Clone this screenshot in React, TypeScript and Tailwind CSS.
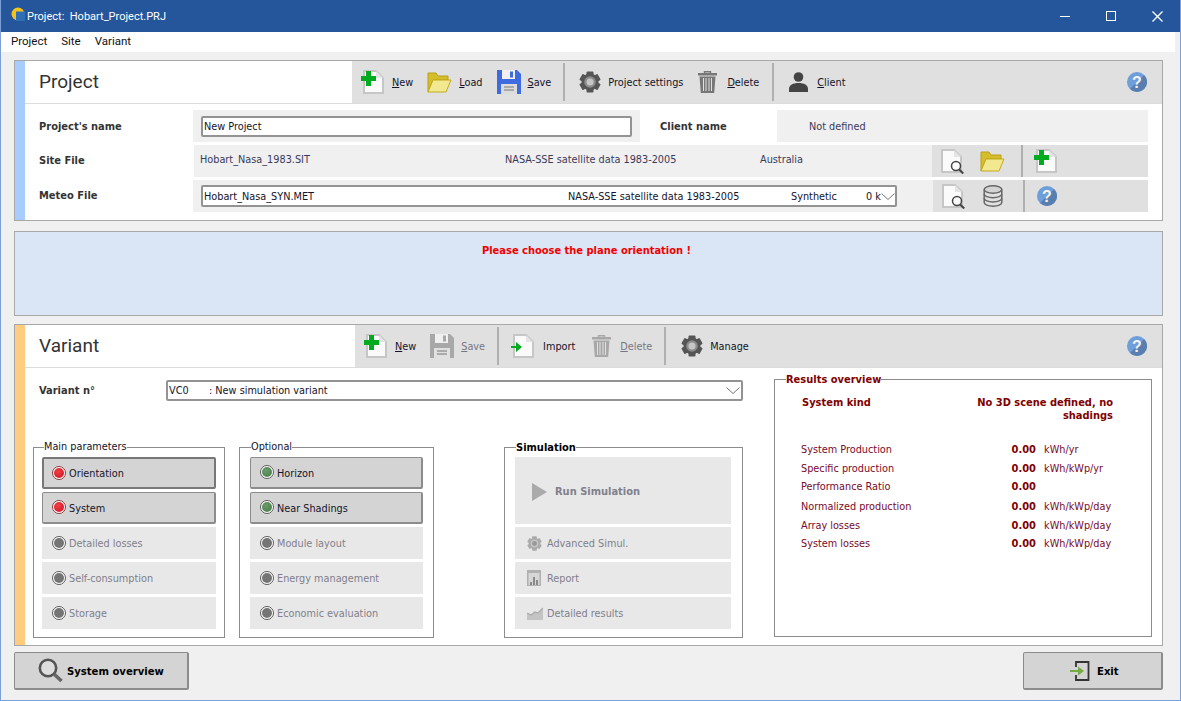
import type { ReactNode } from 'react';

// --- icons ---

function PlusMark({ x = 0, y = 0 }: { x?: number; y?: number }) {
  return <path d={`M${x + 5} ${y}h5v5h5v5h-5v5h-5v-5h-5v-5h5z`} fill="#00ab1f" />;
}

function Page({ x = 0, color = '#c6c6c6' }: { x?: number; color?: string }) {
  return (
    <>
      <path d={`M${x + 1} 1h12l7 7v15h-19z`} fill="#fafafa" stroke={color} strokeWidth="2" />
      <path d={`M${x + 13} 1v7h7z`} fill="#e4e4e4" />
    </>
  );
}

function NewDoc() {
  return (
    <svg width="23" height="24" viewBox="0 0 23 24">
      <Page x={2} />
      <PlusMark x={0} y={1} />
    </svg>
  );
}

function ImportDoc() {
  return (
    <svg width="23" height="24" viewBox="0 0 23 24">
      <Page x={2} />
      <path d="M0 12h5V8l6 5-6 5v-4H0z" fill="#00ab1f" />
    </svg>
  );
}

function DocSearch() {
  return (
    <svg width="23" height="25" viewBox="0 0 23 25">
      <Page x={0} />
      <circle cx="15" cy="17" r="4.500" fill="#fafafa" stroke="#444" strokeWidth="1.500" />
      <path d="M18.200 20.500l4 4" stroke="#444" strokeWidth="2" />
    </svg>
  );
}

function Folder() {
  return (
    <svg width="25" height="21" viewBox="0 0 25 21">
      <path d="M1 20V1h8l2 3h10v4H6z" fill="#d6bd2c" stroke="#b9a117" />
      <path d="M1 20L6 8h18l-5 12z" fill="#f1e88f" stroke="#c4ab1c" />
    </svg>
  );
}

function Floppy({ color = '#3e6be0', light = '#dcdcdc' }: { color?: string; light?: string }) {
  return (
    <svg width="24" height="24" viewBox="0 0 24 24">
      <path d="M0 0h20l4 4v20H0z" fill={color} />
      <rect x="5" y="0" width="13" height="9" fill="#f0f0f0" />
      <rect x="13" y="1.500" width="3" height="6" fill={color} />
      <rect x="4" y="14" width="16" height="10" fill={light} />
      <path d="M7 17h10M7 20h10" stroke="#999" strokeWidth="1.300" />
    </svg>
  );
}

function Gear({ size = 22, color = '#555', mid = '#8c8c8c', hub = '#c6c6c6' }: { size?: number; color?: string; mid?: string; hub?: string }) {
  return (
    <svg width={size} height={size} viewBox="0 0 22 22">
      <g fill={color}>
        <circle cx="11" cy="11" r="8.500" />
        {[0, 60, 120, 180, 240, 300].map((a) => (
          <rect key={a} x="7.500" y="0.500" width="7" height="5" rx="1" transform={`rotate(${a} 11 11)`} />
        ))}
      </g>
      <circle cx="11" cy="11" r="5.800" fill={mid} />
      <circle cx="11" cy="11" r="3.500" fill={hub} />
    </svg>
  );
}

function Trash({ color = '#777' }: { color?: string }) {
  return (
    <svg width="19" height="22" viewBox="0 0 19 22">
      <path d="M6.500 2V.7h6V2" fill="none" stroke={color} strokeWidth="1.400" />
      <rect x="0" y="2" width="19" height="2.500" fill={color} />
      <path d="M1.500 5.500h16l-1.300 16.500H2.800z" fill={color} />
      <path d="M5.500 7v13M8 7v13M11 7v13M13.500 7v13" stroke="#e0e0e0" strokeWidth="1" />
    </svg>
  );
}

function User() {
  return (
    <svg width="19" height="20" viewBox="0 0 19 20">
      <circle cx="9.500" cy="5" r="4.800" fill="#444" />
      <path d="M0 20v-3c0-4 4-6 9.500-6s9.500 2 9.500 6v3z" fill="#444" />
    </svg>
  );
}

function Help() {
  return (
    <svg width="20" height="20" viewBox="0 0 20 20">
      <circle cx="10" cy="10" r="10" fill="#6f9fdb" />
      <path d="M17.100 2.900A10 10 0 0 1 3 17.100z" fill="#587fb0" />
      <text x="10" y="15.500" textAnchor="middle" fontSize="16" fontWeight="700" fill="#f4f4f4" fontFamily="'Liberation Sans', sans-serif">
        ?
      </text>
    </svg>
  );
}

function Database() {
  return (
    <svg width="20" height="22" viewBox="0 0 20 22">
      <g fill="none" stroke="#666" strokeWidth="1.500">
        <ellipse cx="10" cy="4.500" rx="8.800" ry="3.700" fill="#d4d4d4" />
        <path d="M1.200 4.500v13c0 2 3.900 3.700 8.800 3.700s8.800-1.700 8.800-3.700v-13" />
        <path d="M1.200 9c0 2 3.900 3.700 8.800 3.700s8.800-1.700 8.800-3.700M1.200 13.300c0 2 3.900 3.700 8.800 3.700s8.800-1.700 8.800-3.700" />
      </g>
    </svg>
  );
}

function Magnifier() {
  return (
    <svg width="25" height="25" viewBox="0 0 25 25">
      <circle cx="10" cy="10" r="8.200" fill="#f4f4f4" fillOpacity=".3" stroke="#555" strokeWidth="2.600" />
      <path d="M16 16l7.500 7" stroke="#666" strokeWidth="3.600" />
    </svg>
  );
}

function ExitIcon() {
  return (
    <svg width="20" height="20" viewBox="0 0 20 20">
      <path d="M6 6V1h12.500v18H6v-5" fill="none" stroke="#333" strokeWidth="1.800" />
      <path d="M0 9h8V5.500l6 4.500-6 4.500V11H0z" fill="#74ab42" />
    </svg>
  );
}

function ReportIcon() {
  return (
    <svg width="14" height="16" viewBox="0 0 14 16">
      <rect width="14" height="16" fill="#b0b0b0" />
      <rect x="1.500" y="3" width="11" height="12" fill="#d6d6d6" />
      <path d="M4 15v-3M7 15V7M10 15v-5" stroke="#8a8a8a" strokeWidth="2" />
    </svg>
  );
}

function ChartIcon() {
  return (
    <svg width="16" height="13" viewBox="0 0 16 13">
      <path d="M0 13V6l4 2 4-3 3 1 5-5v12z" fill="#c4c4c4" />
      <path d="M0 6l4 2 4-3 3 1 5-5" fill="none" stroke="#aaa" strokeWidth="1.200" />
    </svg>
  );
}

function Chevron() {
  return (
    <svg width="14" height="7" viewBox="0 0 14 7" className="shrink-0">
      <path d="M.5 .5L7 6.500 13.500 .5" fill="none" stroke="#777" />
    </svg>
  );
}

function Led({ tone }: { tone: 'red' | 'green' | 'gray' }) {
  const ring = tone === 'red' ? 'border-[#8a3a3a]' : 'border-[#5a5a5a]';
  const dot =
    tone === 'red'
      ? 'bg-[radial-gradient(circle_at_40%_35%,#ee4048,#d01020)]'
      : tone === 'green'
        ? 'bg-[radial-gradient(circle_at_40%_35%,#6a9a6a,#447c46)]'
        : 'bg-[#757575]';
  return (
    <span className={`flex h-[14px] w-[14px] shrink-0 items-center justify-center rounded-full border bg-white ${ring}`}>
      <span className={`h-[10px] w-[10px] rounded-full ${dot}`} />
    </span>
  );
}

// --- shared bits ---

function ToolItem({ icon, label, className, disabled }: { icon: ReactNode; label: ReactNode; className: string; disabled?: boolean }) {
  return (
    <div className={`flex shrink-0 items-center ${className} ${disabled ? 'text-[#777784]' : 'text-[#14142a]'}`}>
      {icon}
      {label}
    </div>
  );
}

function Sep({ className }: { className: string }) {
  return <div className={`h-[38px] w-[2px] shrink-0 bg-[#b0b0b0] ${className}`} />;
}

function Panel({ stripe, children }: { stripe: string; children: ReactNode }) {
  return (
    <div className="ml-[13px] flex w-[1149px] border border-[#a8a8a8] bg-white">
      <div className={`w-[10px] shrink-0 ${stripe}`} />
      <div className="min-w-0 flex-1">{children}</div>
    </div>
  );
}

function Header({ title, width, children }: { title: string; width: string; children: ReactNode }) {
  return (
    <div className="flex h-[43px] border-b border-[#dcdcdc]">
      <div className={`flex shrink-0 items-center pb-[1px] pl-[14px] font-['Roboto','Open_Sans',sans-serif] text-[19px] text-[#333] ${width}`}>{title}</div>
      <div className="flex flex-1 items-center bg-[#e0e0e0]">
        {children}
        <div className="ml-auto mr-[15px]">
          <Help />
        </div>
      </div>
    </div>
  );
}

function ParamButton({ label, tone, state }: { label: string; tone: 'red' | 'green' | 'gray'; state: 'focus' | 'raised' | 'off' }) {
  const look =
    state === 'focus'
      ? 'rounded-[2px] border-2 border-[#777] bg-[#d4d4d4] text-[#14142a]'
      : state === 'raised'
        ? 'rounded-[2px] border border-b-2 border-r-2 border-[#8c8c8c] bg-[#d4d4d4] text-[#14142a]'
        : 'bg-[#e8e8e8] text-[#80808c]';
  return (
    <div className={`box-border flex h-[32px] items-center gap-[3px] ${state === 'focus' ? 'pl-[8px]' : state === 'raised' ? 'pl-[9px]' : 'pl-[10px]'} ${look}`}>
      <Led tone={tone} />
      <span className="pt-[4px]">{label}</span>
    </div>
  );
}

function SimButton({ icon, label }: { icon: ReactNode; label: string }) {
  return (
    <div className="flex h-[32px] items-center bg-[#e8e8e8] pl-[12px] text-[#80808c]">
      <span className="flex w-[20px] shrink-0 items-center">{icon}</span>
      <span className="pt-[2px]">{label}</span>
    </div>
  );
}

const results = [
  { label: 'System Production', unit: 'kWh/yr', cls: 'h-[19px]' },
  { label: 'Specific production', unit: 'kWh/kWp/yr', cls: 'h-[18px]' },
  { label: 'Performance Ratio', unit: '', cls: 'h-[19px]' },
  { label: 'Normalized production', unit: 'kWh/kWp/day', cls: 'h-[20px]' },
  { label: 'Array losses', unit: 'kWh/kWp/day', cls: 'h-[18px]' },
  { label: 'System losses', unit: 'kWh/kWp/day', cls: 'h-[18px]' },
];

export default function App() {
  return (
    <div className="box-border flex h-[701px] w-[1181px] flex-col overflow-hidden border-x border-b border-[#7b9fd6] bg-[#f0f0f0] font-['DejaVu_Sans_Condensed','DejaVu_Sans',sans-serif] text-[10.8px] leading-none text-[#14142a]">
      {/* title bar */}
      <div className="flex h-[32px] shrink-0 items-center bg-[#25569b] font-['Roboto','Open_Sans',sans-serif] text-[11px] text-white">
        <svg width="14" height="14" viewBox="0 0 14 14" className="ml-[10px] mr-[2px] -mt-[5px]">
          <circle cx="7" cy="7" r="6.500" fill="#f5c21b" />
          <path d="M5 4.500h9V14H5z" fill="#2f6fb5" />
        </svg>
        <span className="whitespace-pre">Project:  Hobart_Project.PRJ</span>
        <div className="ml-auto flex items-center">
          <div className="mr-[36px] h-[1px] w-[10px] bg-white" />
          <div className="mr-[36px] h-[10px] w-[10px] border border-white" />
          <svg width="11" height="11" viewBox="0 0 11 11" className="mr-[17px]">
            <path d="M.5 .5l10 10M10.500 .5l-10 10" stroke="#fff" strokeWidth="1.400" />
          </svg>
        </div>
      </div>

      {/* menu */}
      <div className="flex h-[20px] w-[1174px] shrink-0 items-center gap-[14px] bg-white pl-[10px] font-['Roboto','Open_Sans',sans-serif] text-[11.5px] text-[#111]">
        <span>Project</span>
        <span>Site</span>
        <span>Variant</span>
      </div>

      <div className="h-[8px] shrink-0" />

      {/* project panel */}
      <Panel stripe="bg-[#a9ccff]">
        <div className="h-[159px]">
          <Header title="Project" width="w-[327px]">
            <ToolItem className="ml-[9px]" icon={<NewDoc />} label={<span className="ml-[8px] pt-[3px]"><u>N</u>ew</span>} />
            <ToolItem className="ml-[14px]" icon={<Folder />} label={<span className="ml-[7px] pt-[3px]"><u>L</u>oad</span>} />
            <ToolItem className="ml-[14px]" icon={<Floppy />} label={<span className="ml-[7px] pt-[3px]"><u>S</u>ave</span>} />
            <Sep className="ml-[12px]" />
            <ToolItem className="ml-[14px]" icon={<Gear />} label={<span className="ml-[7px] pt-[3px]">Project settings</span>} />
            <ToolItem className="ml-[15px]" icon={<Trash />} label={<span className="ml-[10px] pt-[3px]"><u>D</u>elete</span>} />
            <Sep className="ml-[13px]" />
            <ToolItem className="ml-[15px]" icon={<User />} label={<span className="ml-[9px] pt-[3px]"><u>C</u>lient</span>} />
          </Header>

          <div className="mt-[6px] flex flex-col gap-[3px] text-[#3a3a5a]">
            <div className="flex h-[32px] items-center">
              <div className="w-[168px] shrink-0 pl-[14px] text-[11px] font-bold text-[#333]">Project's name</div>
              <div className="flex h-full w-[447px] shrink-0 items-center bg-[#f0f0f0] pl-[8px]">
                <div className="box-border flex h-[21px] w-[431px] items-center rounded-[2px] border-2 border-[#939393] bg-white pl-[1px] pt-[2px] text-[#14142a]">New Project</div>
              </div>
              <div className="w-[137px] shrink-0 pl-[20px] text-[11px] font-bold text-[#333]">Client name</div>
              <div className="flex h-full w-[371px] shrink-0 items-center bg-[#f0f0f0] pl-[32px] pt-[2px]">Not defined</div>
            </div>

            <div className="flex h-[32px] items-center">
              <div className="w-[169px] shrink-0 pb-[2px] pl-[14px] text-[11px] font-bold text-[#333]">Site File</div>
              <div className="flex h-full w-[738px] shrink-0 items-center bg-[#f0f0f0] pb-[2px] pl-[6px]">
                <span className="w-[305px] shrink-0">Hobart_Nasa_1983.SIT</span>
                <span className="w-[255px] shrink-0">NASA-SSE satellite data 1983-2005</span>
                <span>Australia</span>
              </div>
              <div className="flex h-full w-[216px] shrink-0 items-center bg-[#e0e0e0] pl-[9px]">
                <DocSearch />
                <div className="ml-[16px]"><Folder /></div>
                <div className="ml-[16px] h-full w-[2px] bg-[#b0b0b0]" />
                <div className="ml-[11px]"><NewDoc /></div>
              </div>
            </div>

            <div className="flex h-[32px] items-center">
              <div className="w-[168px] shrink-0 pb-[2px] pl-[14px] text-[11px] font-bold text-[#333]">Meteo File</div>
              <div className="flex h-full w-[740px] shrink-0 items-center bg-[#f0f0f0] pl-[8px]">
                <div className="box-border flex h-[22px] w-[696px] items-center rounded-[2px] border-2 border-[#939393] bg-white pl-[1px] text-[#14142a]">
                  <span className="w-[364px] shrink-0 pt-[2px]">Hobart_Nasa_SYN.MET</span>
                  <span className="w-[223px] shrink-0 pt-[2px]">NASA-SSE satellite data 1983-2005</span>
                  <span className="w-[75px] shrink-0 pt-[2px]">Synthetic</span>
                  <span className="w-[15px] shrink-0 whitespace-nowrap pt-[2px]">0 k</span>
                  <Chevron />
                </div>
              </div>
              <div className="flex h-full w-[215px] shrink-0 items-center bg-[#e0e0e0] pl-[9px]">
                <DocSearch />
                <div className="ml-[18px]"><Database /></div>
                <div className="ml-[20px] h-full w-[2px] bg-[#b0b0b0]" />
                <div className="ml-[12px]"><Help /></div>
              </div>
            </div>
          </div>
        </div>
      </Panel>

      {/* message box */}
      <div className="ml-[13px] mt-[10px] box-border h-[85px] w-[1149px] border border-[#a8a8a8] bg-[#dae5f5] pr-[4px] pt-[13px] text-center text-[11px] font-bold text-[#f00000]">
        Please choose the plane orientation !
      </div>

      {/* variant panel */}
      <div className="mt-[8px]">
        <Panel stripe="bg-[#ffcc80]">
          <div className="h-[320px]">
            <Header title="Variant" width="w-[330px]">
              <ToolItem className="ml-[9px]" icon={<NewDoc />} label={<span className="ml-[8px] pt-[3px]"><u>N</u>ew</span>} />
              <ToolItem className="ml-[14px]" disabled icon={<Floppy color="#a8a8a8" light="#e0e0e0" />} label={<span className="ml-[7px] pt-[3px]"><u>S</u>ave</span>} />
              <Sep className="ml-[12px]" />
              <ToolItem className="ml-[12px]" icon={<ImportDoc />} label={<span className="ml-[9px] pt-[3px]">Import</span>} />
              <ToolItem className="ml-[17px]" disabled icon={<Trash color="#a8a8a8" />} label={<span className="ml-[9px] pt-[3px]"><u>D</u>elete</span>} />
              <Sep className="ml-[12px]" />
              <ToolItem className="ml-[15px]" icon={<Gear />} label={<span className="ml-[7px] pt-[3px]">Manage</span>} />
            </Header>

            <div className="flex">
              <div className="w-[749px] shrink-0">
                <div className="mt-[12px] flex h-[21px] items-center">
                  <div className="w-[141px] shrink-0 pl-[14px] text-[11px] font-bold text-[#333]">Variant n°</div>
                  <div className="box-border flex h-[21px] w-[577px] items-center justify-between rounded-[2px] border-2 border-[#939393] bg-white pl-[1px] pr-[1px] text-[#14142a]">
                    <span className="flex pt-[2px]">
                      <span className="w-[40px]">VC0</span>
                      <span>: New simulation variant</span>
                    </span>
                    <Chevron />
                  </div>
                </div>

                <div className="mt-[41px] flex items-start pl-[8px]">
                  <fieldset className="box-border h-[196px] w-[192px] border border-[#8c8c8c] px-[8px]">
                    <legend className="ml-[2px] text-[#14142a]">Main parameters</legend>
                    <div className="mt-[4px] flex flex-col gap-[3px]">
                      <ParamButton label="Orientation" tone="red" state="focus" />
                      <ParamButton label="System" tone="red" state="raised" />
                      <ParamButton label="Detailed losses" tone="gray" state="off" />
                      <ParamButton label="Self-consumption" tone="gray" state="off" />
                      <ParamButton label="Storage" tone="gray" state="off" />
                    </div>
                  </fieldset>
                  <fieldset className="ml-[14px] box-border h-[196px] w-[195px] border border-[#8c8c8c] pl-[10px] pr-[10px]">
                    <legend className="ml-[1px] text-[#14142a]">Optional</legend>
                    <div className="mt-[4px] flex flex-col gap-[3px]">
                      <ParamButton label="Horizon" tone="green" state="raised" />
                      <ParamButton label="Near Shadings" tone="green" state="raised" />
                      <ParamButton label="Module layout" tone="gray" state="off" />
                      <ParamButton label="Energy management" tone="gray" state="off" />
                      <ParamButton label="Economic evaluation" tone="gray" state="off" />
                    </div>
                  </fieldset>
                  <fieldset className="ml-[70px] box-border h-[196px] w-[239px] border border-[#8c8c8c] pl-[10px] pr-[11px]">
                    <legend className="ml-[1px] text-[11px] font-bold text-black">Simulation</legend>
                    <div className="mt-[4px] flex flex-col gap-[3px]">
                      <div className="flex h-[67px] items-center bg-[#e8e8e8] pl-[17px] text-[11px] font-bold text-[#80808c]">
                        <svg width="15" height="18" viewBox="0 0 15 18" className="mr-[8px] mt-[2px]">
                          <path d="M0 0l15 9-15 9z" fill="#aaa" />
                        </svg>
                        <span className="pt-[2px]">Run Simulation</span>
                      </div>
                      <SimButton icon={<Gear size={15} color="#aaa" mid="#c4c4c4" hub="#999" />} label="Advanced Simul." />
                      <SimButton icon={<ReportIcon />} label="Report" />
                      <SimButton icon={<ChartIcon />} label="Detailed results" />
                    </div>
                  </fieldset>
                </div>
              </div>

              <fieldset className="mt-[6px] box-border h-[263px] w-[378px] shrink-0 border border-[#8c8c8c] text-[#7a0a2a]">
                <legend className="ml-[11px] text-[11px] font-bold text-[#800000]">Results overview</legend>
                <div className="mt-[11px] flex h-[34px] pl-[27px] text-[11px] font-bold leading-[13px] text-[#800000]">
                  <span>System kind</span>
                  <span className="ml-auto mr-[38px] w-[150px] text-right">No 3D scene defined, no shadings</span>
                </div>
                <div className="mt-[11px] pl-[26px]">
                  {results.map((r) => (
                    <div key={r.label} className={`flex items-center ${r.cls}`}>
                      <span className="w-[190px] shrink-0">{r.label}</span>
                      <span className="w-[45px] shrink-0 pb-[2px] text-right text-[11px] font-bold text-[#800000]">0.00</span>
                      <span className="ml-[8px]">{r.unit}</span>
                    </div>
                  ))}
                </div>
              </fieldset>
            </div>
          </div>
        </Panel>
      </div>

      {/* bottom buttons */}
      <div className="ml-[13px] mt-[6px] flex w-[1149px] justify-between">
        <div className="box-border flex h-[38px] w-[175px] items-center rounded-[2px] border border-b-2 border-r-2 border-[#8c8c8c] bg-[#d4d4d4] pl-[23px] text-[11.2px] font-bold text-black">
          <Magnifier />
          <span className="ml-[4px] pt-[3px]">System overview</span>
        </div>
        <div className="box-border flex h-[38px] w-[140px] items-center rounded-[2px] border border-b-2 border-r-2 border-[#8c8c8c] bg-[#d4d4d4] pl-[46px] text-[11.2px] font-bold text-black">
          <ExitIcon />
          <span className="ml-[7px] pt-[3px]">Exit</span>
        </div>
      </div>
    </div>
  );
}
